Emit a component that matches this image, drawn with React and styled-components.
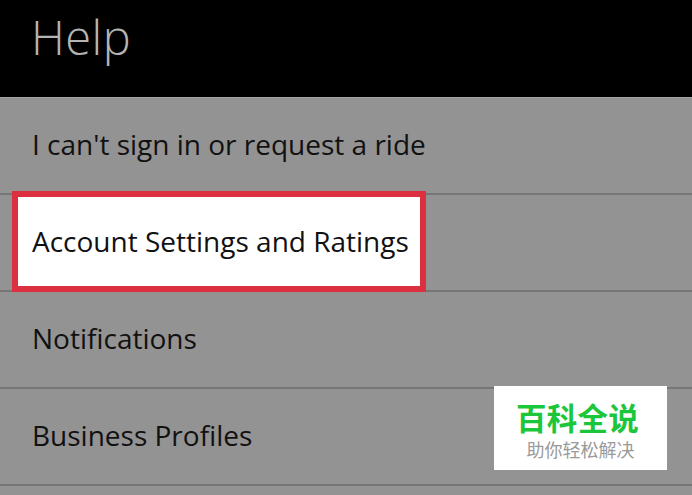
import React from 'react';
import styled, { createGlobalStyle } from 'styled-components';

const GlobalStyle = createGlobalStyle`
  html, body {
    margin: 0;
    padding: 0;
    background: #939393;
    overflow: hidden;
  }
  body {
    font-family: "Open Sans", "Noto Sans", sans-serif;
  }
`;

const Screen = styled.div`
  position: relative;
  width: 692px;
  height: 495px;
  overflow: hidden;
  background: #939393;
`;

const Header = styled.header`
  height: 98px;
  background: #000;
  display: flex;
  align-items: center;
  padding-left: 31px;
  box-sizing: border-box;
  border-bottom: 1px solid #a4a4a4;
`;

const Title = styled.h1`
  margin: 0 0 24px;
  font-family: "Open Sans", sans-serif;
  font-weight: 300;
  font-size: 47px;
  line-height: 56px;
  color: #b4b4b4;
  letter-spacing: 0.5px;
`;

const List = styled.ul`
  list-style: none;
  margin: 0;
  padding: 0;
`;

const Row = styled.li`
  position: relative;
  height: 95px;
  border-bottom: 2px solid #767676;
  display: flex;
  align-items: center;
  padding-left: 32px;
`;

const Label = styled.span`
  position: relative;
  z-index: 1;
  font-size: 28px;
  line-height: 36px;
  margin-bottom: 3px;
  color: #111;
`;

const Highlight = styled.div`
  position: absolute;
  left: 12px;
  top: -4px;
  width: 414px;
  height: 101px;
  box-sizing: border-box;
  border: 6px solid #dc2f3f;
  background: #fff;
`;

const Watermark = styled.div`
  position: absolute;
  left: 494px;
  top: 386px;
  width: 173px;
  height: 84px;
  background: #fff;
  display: flex;
  flex-direction: column;
  align-items: center;
  padding-top: 17px;
  box-sizing: border-box;
  gap: 9px;
  font-family: "Noto Sans CJK SC", sans-serif;
`;

const Brand = styled.div`
  font-size: 30.5px;
  font-weight: 700;
  color: #1cc63a;
  line-height: 28px;
  letter-spacing: 0.3px;
  margin-left: -6px;
`;

const Slogan = styled.div`
  font-size: 18px;
  color: #9a9a9a;
  line-height: 18px;
`;

const items = [
  { text: "I can't sign in or request a ride" },
  { text: 'Account Settings and Ratings', selected: true },
  { text: 'Notifications' },
  { text: 'Business Profiles' },
];

export default function App() {
  return (
    <Screen>
      <GlobalStyle />
      <Header>
        <Title>Help</Title>
      </Header>
      <List>
        {items.map(item => (
          <Row key={item.text}>
            {item.selected && <Highlight />}
            <Label>{item.text}</Label>
          </Row>
        ))}
      </List>
      <Watermark>
        <Brand>百科全说</Brand>
        <Slogan>助你轻松解决</Slogan>
      </Watermark>
    </Screen>
  );
}
